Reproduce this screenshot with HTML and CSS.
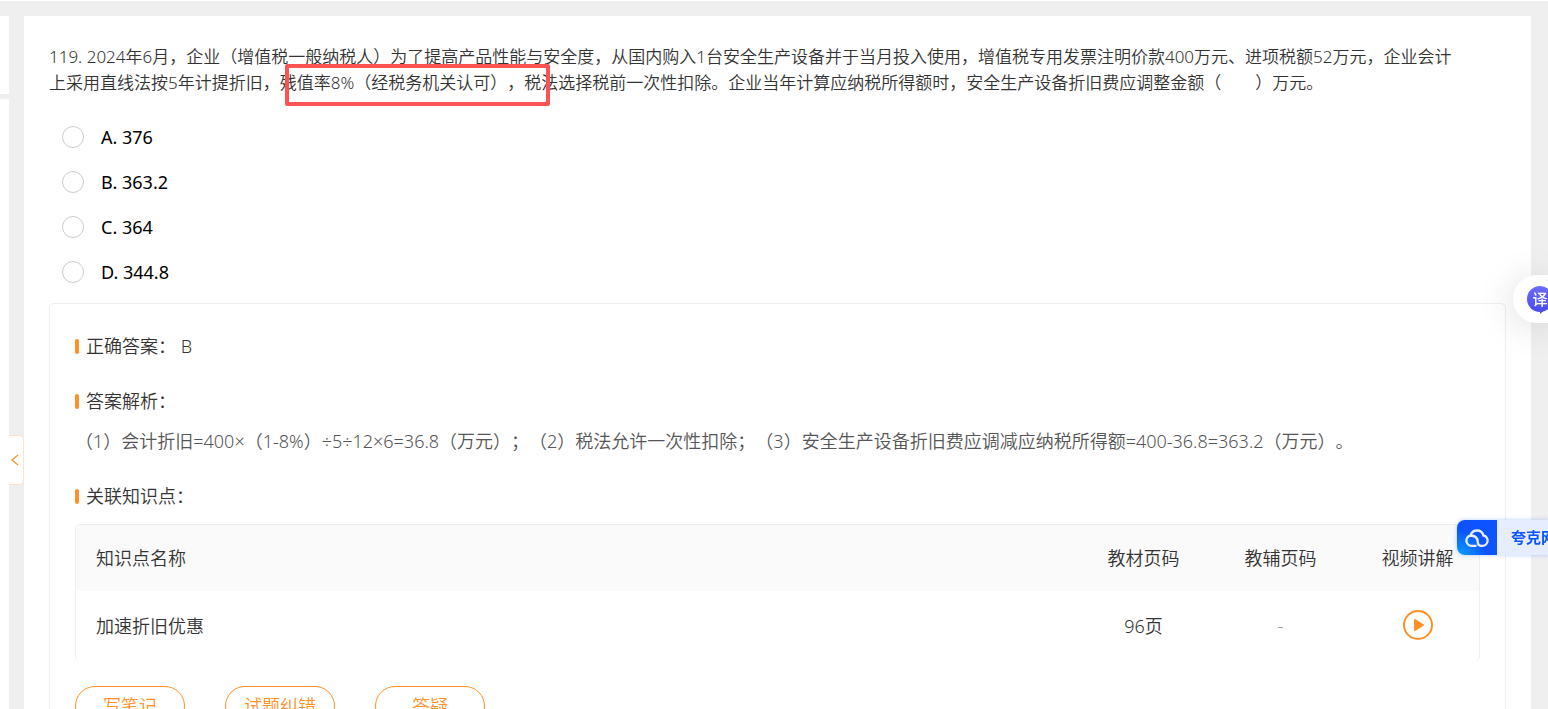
FILE: index.html
```
<!DOCTYPE html>
<html lang="zh-CN">
<head>
<meta charset="UTF-8">
<meta name="viewport" content="width=device-width, initial-scale=1.0">
<title>试题解析</title>
<link rel="stylesheet" href="styles.css">
</head>
<body>

<div class="page">
  <aside class="side">
    <div class="side-top"></div>
    <div class="side-main"></div>
  </aside>

  <div class="gutter">
    <button type="button" class="fold" aria-label="收起">
      <svg width="8" height="12" viewBox="0 0 8 12"><path d="M7 1 L1 6 L7 11" fill="none" stroke="#ff9027" stroke-width="1.3"/></svg>
    </button>
  </div>

  <main class="card">
    <div class="question">
      <p>119. 2024年6月，企业（增值税一般纳税人）为了提高产品性能与安全度，从国内购入1台安全生产设备并于当月投入使用，增值税专用发票注明价款400万元、进项税额52万元，企业会计<br>上采用直线法按5年计提折旧，残值率8%（经税务机关认可），税法选择税前一次性扣除。企业当年计算应纳税所得额时，安全生产设备折旧费应调整金额（&emsp;&emsp;）万元。</p>
      <div class="mark"></div>
    </div>

    <form class="options">
      <label><input type="radio" name="answer" value="A">A. 376</label>
      <label><input type="radio" name="answer" value="B">B. 363.2</label>
      <label><input type="radio" name="answer" value="C">C. 364</label>
      <label><input type="radio" name="answer" value="D">D. 344.8</label>
    </form>

    <section class="analysis">
      <h2>正确答案： B</h2>
      <h2>答案解析：</h2>
      <p class="explain">（1）会计折旧=400×（1-8%）÷5÷12×6=36.8（万元）；（2）税法允许一次性扣除；（3）安全生产设备折旧费应调减应纳税所得额=400-36.8=363.2（万元）。</p>
      <h2>关联知识点：</h2>
      <div class="table-box">
        <table>
          <thead>
            <tr><th class="name">知识点名称</th><th>教材页码</th><th>教辅页码</th><th>视频讲解</th></tr>
          </thead>
          <tbody>
            <tr>
              <td class="name">加速折旧优惠</td>
              <td>96页</td>
              <td class="none">-</td>
              <td>
                <button type="button" class="play" aria-label="播放">
                  <svg width="30" height="30" viewBox="0 0 30 30"><circle cx="15" cy="15" r="14" fill="none" stroke="#ff9027" stroke-width="2"/><path d="M12 10 L20 15 L12 20 Z" fill="#ff9027" stroke="#ff9027" stroke-width="2" stroke-linejoin="round"/></svg>
                </button>
              </td>
            </tr>
          </tbody>
        </table>
      </div>
      <div class="actions">
        <button type="button">写笔记</button>
        <button type="button">试题纠错</button>
        <button type="button">答疑</button>
      </div>
    </section>
  </main>
</div>

<button type="button" class="translate" aria-label="翻译">
  <svg width="26" height="30" viewBox="0 0 26 30"><path d="M13 22 L13 29 L21 22 Z" fill="#4a4bf0"/></svg>
  <span>译</span>
</button>

<a href="#" class="quark">
  <span class="quark-icon">
    <svg width="24" height="19" viewBox="0 0 24 19"><path d="M11.500 17.800 H6.500 A5.200 5.200 0 0 1 5.600 7.500 A6.600 6.600 0 0 1 18.400 7.500 A5.200 5.200 0 0 1 17.500 17.800 H16 Q12.800 17.600 12.800 14.200 Q12.600 7.600 5.600 7.500" fill="none" stroke="#e6edff" stroke-width="2.300"/></svg>
  </span>
  <span class="quark-text">夸克网盘</span>
</a>

</body>
</html>
```
FILE: styles.css
```
* {
  box-sizing: border-box;
}

body {
  margin: 0;
  background-color: #efefef;
  color: #333;
  font-family: "Noto Sans", "Noto Sans CJK SC", sans-serif;
  font-size: 18px;
  font-weight: 350;
  text-spacing-trim: space-all;
}

button {
  font: inherit;
  cursor: pointer;
}

.page {
  display: flex;
  height: 100vh;
  overflow: hidden;
  border-top: 1px solid #fff;
}

/* left column */
.side {
  display: flex;
  flex-direction: column;
  gap: 5px;
  width: 9px;
  padding-top: 15px;
}

.side-top {
  height: 78px;
  background-color: #fff;
}

.side-main {
  flex: 1;
  background-color: #fff;
}

.gutter {
  width: 15px;
  padding-top: 434px;
}

.fold {
  display: flex;
  align-items: center;
  justify-content: center;
  width: 15px;
  height: 50px;
  padding: 0 3px 0 0;
  border: 1px solid #ffe3c8;
  border-left: none;
  border-radius: 0 5px 5px 0;
  background-color: #fff;
}

/* question card */
.card {
  flex: 1;
  align-self: flex-start;
  min-width: 0;
  margin: 15px 17px 0 0;
  padding: 28px 25px 0;
  background-color: #fff;
}

.question {
  position: relative;
  font-size: 17px;
  line-height: 26px;
}

.question p {
  margin: 0;
  white-space: nowrap;
}

.mark {
  position: absolute;
  top: 20px;
  left: 236px;
  width: 265px;
  height: 42px;
  border: 4px solid #ff5252;
  border-radius: 2px;
}

.options {
  padding: 18px 0 9px 13px;
}

.options label {
  display: flex;
  align-items: center;
  gap: 17px;
  height: 45px;
  color: #000;
  font-weight: 400;
}

.options input {
  appearance: none;
  width: 22px;
  height: 22px;
  margin: 0;
  border: 1px solid #ccc;
  border-radius: 50%;
}

.analysis {
  padding: 29px 25px 40px;
  border: 1px solid #eee;
  border-radius: 5px;
}

.analysis h2 {
  display: flex;
  align-items: center;
  gap: 7px;
  margin: 0 0 29px;
  font-size: 18px;
  font-weight: 350;
  line-height: 26px;
}

.analysis h2::before {
  content: "";
  width: 4px;
  height: 15px;
  border-radius: 2px;
  background-color: #ff9027;
}

.analysis h2:has(+ .explain) {
  margin-bottom: 14px;
}

.analysis h2:has(+ .table-box) {
  margin-bottom: 15px;
}

.explain {
  margin: 0 0 29px;
  color: #555;
  line-height: 26px;
}

.table-box {
  border: 1px solid #eee;
  border-bottom: none;
  border-radius: 5px;
  overflow: hidden;
}

table {
  width: 100%;
  border-collapse: collapse;
  table-layout: fixed;
}

th,
td {
  width: 137px;
  height: 66px;
  padding: 0 0 2px 14px;
  font-weight: 350;
  text-align: center;
}

td {
  height: 70px;
}

th {
  background-color: #fafafa;
}

.name {
  width: auto;
  padding-left: 20px;
  text-align: left;
}

.none {
  color: #999;
}

.play {
  display: block;
  margin: 0 auto;
  padding: 0;
  border: none;
  background: none;
}

.play svg {
  display: block;
}

.actions {
  display: flex;
  gap: 40px;
  margin-top: 25px;
}

.actions button {
  width: 110px;
  height: 40px;
  padding: 0 0 2px;
  border: 1px solid #ff9027;
  border-radius: 20px;
  background-color: #fff;
  color: #ff9027;
}

/* floating tools on the right edge */
.translate {
  position: fixed;
  top: 275px;
  right: 0;
  width: 35px;
  height: 48px;
  padding: 0 0 0 14px;
  border: none;
  border-radius: 24px 0 0 24px;
  background-color: #fff;
  box-shadow: 0 4px 36px rgba(0, 0, 0, 0.15);
  overflow: hidden;
}

.translate svg {
  position: absolute;
  top: 10px;
  left: 14px;
}

.translate span {
  position: relative;
  display: block;
  width: 26px;
  height: 26px;
  border-radius: 50%;
  background: linear-gradient(#6a6cff, #4a4bf0);
  color: #fff;
  font-size: 15px;
  font-weight: 500;
  line-height: 26px;
}

.quark {
  position: fixed;
  top: 520px;
  right: 0;
  display: flex;
  width: 91px;
  height: 35px;
  border-radius: 8px 0 0 8px;
  background-color: #e6edff;
  box-shadow: 0 0 4px rgba(13, 83, 255, 0.3);
  color: #0d53ff;
  font-size: 15px;
  font-weight: 700;
  line-height: 35px;
  text-decoration: none;
  white-space: nowrap;
  overflow: hidden;
}

.quark-icon {
  display: flex;
  flex: none;
  align-items: center;
  justify-content: center;
  width: 40px;
  background: radial-gradient(circle at 10% 100%, #0a9dff, #0d53ff 50%);
}

.quark-text {
  padding-left: 14px;
}
```
